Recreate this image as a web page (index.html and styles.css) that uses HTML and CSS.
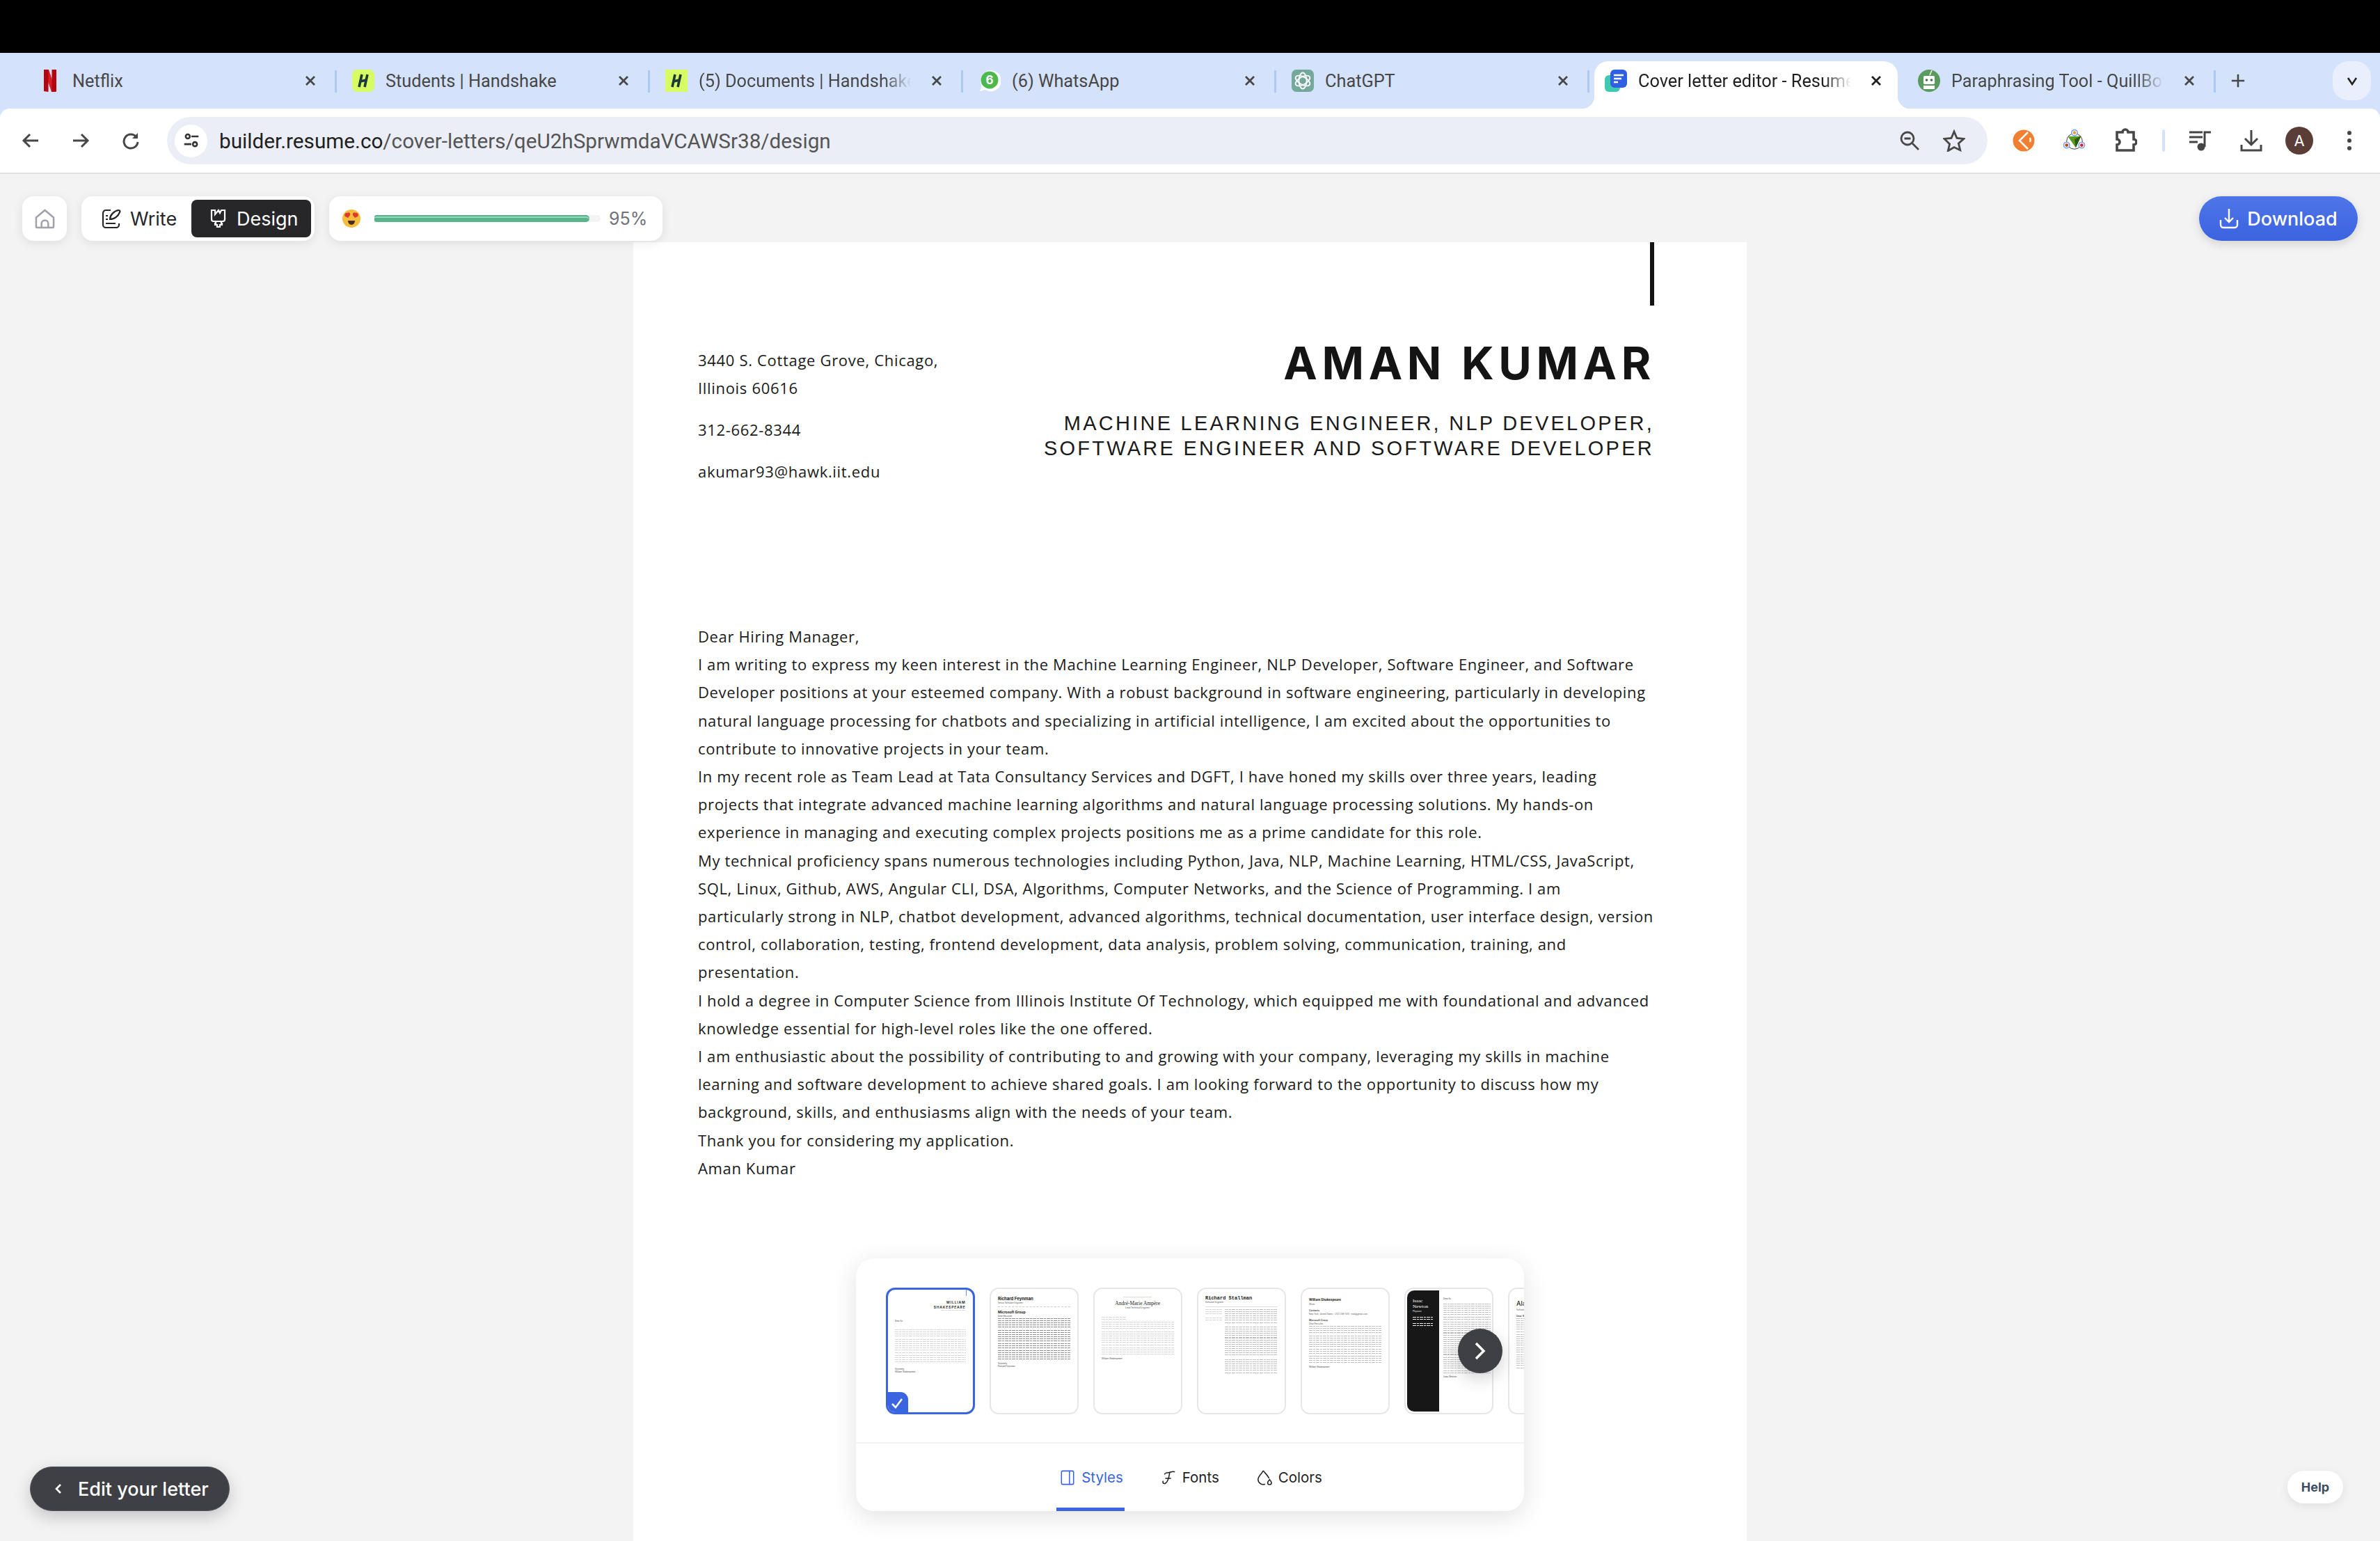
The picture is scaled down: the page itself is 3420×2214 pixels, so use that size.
FILE: index.html
```html
<!DOCTYPE html>
<html lang="en">
<head>
  <meta charset="UTF-8">
  <meta name="viewport" content="width=device-width, initial-scale=1.0">
  <title>Cover letter editor - Resume.co</title>
  <link rel="stylesheet" href="styles.css">
</head>
<body>
  <div class="top-black"></div>

  <!-- browser tabs -->
  <div class="tabstrip">
    <div class="tab sep">
      <svg class="fav" viewBox="0 0 32 32"><path d="M7 0h7l11 32h-7z" fill="#d81f26"/><path d="M7 0h6.500v32L7 31z" fill="#b1060f"/><path d="M18.500 0H25v31l-6.500 1z" fill="#b1060f"/></svg>
      <span class="tab-title">Netflix</span>
      <svg class="tab-x" viewBox="0 0 18 18"><path d="M3 3l12 12M15 3L3 15"/></svg>
    </div>
    <div class="tab sep">
      <svg class="fav" viewBox="0 0 32 32"><rect width="32" height="32" rx="8" fill="#d7fb63"/><path d="M14 7l-4 18M22 7l-4 18M12 17l8-2" stroke="#1c3a3a" stroke-width="3.600" fill="none"/></svg>
      <span class="tab-title">Students | Handshake</span>
      <svg class="tab-x" viewBox="0 0 18 18"><path d="M3 3l12 12M15 3L3 15"/></svg>
    </div>
    <div class="tab sep">
      <svg class="fav" viewBox="0 0 32 32"><rect width="32" height="32" fill="#d7fb63"/><path d="M14 7l-4 18M22 7l-4 18M12 17l8-2" stroke="#1c3a3a" stroke-width="3.600" fill="none"/></svg>
      <span class="tab-title fade">(5) Documents | Handshake</span>
      <svg class="tab-x" viewBox="0 0 18 18"><path d="M3 3l12 12M15 3L3 15"/></svg>
    </div>
    <div class="tab sep">
      <svg class="fav" viewBox="0 0 32 32"><path d="M2 31l2.500-8A15 15 0 1 1 10 29z" fill="#fff"/><circle cx="16" cy="15" r="12.500" fill="#4cb94f"/><text x="16" y="21" class="fav-num">6</text></svg>
      <span class="tab-title">(6) WhatsApp</span>
      <svg class="tab-x" viewBox="0 0 18 18"><path d="M3 3l12 12M15 3L3 15"/></svg>
    </div>
    <div class="tab sep">
      <svg class="fav" viewBox="0 0 32 32"><rect width="32" height="32" rx="7" fill="#74a89a"/><g fill="none" stroke="#fff" stroke-width="1.800"><ellipse cx="16" cy="16" rx="5.500" ry="11.500"/><ellipse cx="16" cy="16" rx="5.500" ry="11.500" transform="rotate(60 16 16)"/><ellipse cx="16" cy="16" rx="5.500" ry="11.500" transform="rotate(120 16 16)"/></g></svg>
      <span class="tab-title">ChatGPT</span>
      <svg class="tab-x" viewBox="0 0 18 18"><path d="M3 3l12 12M15 3L3 15"/></svg>
    </div>
    <div class="tab active">
      <svg class="fav" viewBox="0 0 32 32"><rect x="0" y="8" width="22" height="24" rx="6" fill="#3fc9b0"/><rect x="8" y="0" width="24" height="26" rx="6" fill="#2f5fe3"/><path d="M13 8h14M13 13h11M13 18h6" stroke="#fff" stroke-width="2.600"/></svg>
      <span class="tab-title fade">Cover letter editor - Resume.co</span>
      <svg class="tab-x" viewBox="0 0 18 18"><path d="M3 3l12 12M15 3L3 15"/></svg>
    </div>
    <div class="tab sep no-line-left">
      <svg class="fav" viewBox="0 0 32 32"><circle cx="16" cy="16" r="16" fill="#5b9a5d"/><path d="M17 8l3-7" stroke="#fff" stroke-width="1.500"/><rect x="8" y="9" width="16" height="12" rx="2" fill="#fff"/><circle cx="12.500" cy="15" r="1.800" fill="#3c6e3e"/><circle cx="19.500" cy="15" r="1.800" fill="#3c6e3e"/><rect x="8" y="23" width="16" height="5" fill="#fff"/></svg>
      <span class="tab-title fade">Paraphrasing Tool - QuillBot AI</span>
      <svg class="tab-x" viewBox="0 0 18 18"><path d="M3 3l12 12M15 3L3 15"/></svg>
    </div>
    <svg class="tab-plus" viewBox="0 0 24 24"><path d="M12 2v20M2 12h20"/></svg>
    <div class="tab-menu"><svg viewBox="0 0 18 18"><path d="M3 5l6 9 6-9"/></svg></div>
  </div>

  <!-- url bar -->
  <div class="toolbar">
    <button class="tb-btn"><svg viewBox="0 0 26 26"><path d="M24 13H4M12 4l-9 9 9 9"/></svg></button>
    <button class="tb-btn"><svg viewBox="0 0 26 26"><path d="M2 13h20M14 4l9 9-9 9"/></svg></button>
    <button class="tb-btn"><svg viewBox="0 0 26 26"><path d="M21 8a10 10 0 1 0 2 7"/><path d="M23 2v8h-8" class="solid"/></svg></button>
    <div class="address">
      <span class="site-info"><svg viewBox="0 0 28 28"><circle cx="8" cy="7" r="3.500"/><path d="M14 7h12M2 20h12"/><circle cx="20" cy="20" r="3.500"/></svg></span>
      <span class="url"><b>builder.resume.co</b>/cover-letters/qeU2hSprwmdaVCAWSr38/design</span>
      <svg class="addr-icon zoom-ic" viewBox="0 0 30 30"><circle cx="12" cy="12" r="9"/><path d="M7.500 12h9M19 19l9 9"/></svg>
      <svg class="addr-icon star-ic" viewBox="0 0 32 32"><path d="M16 3l4 9.500 10 .9-7.600 6.500 2.300 9.800L16 25.500l-8.700 5.200 2.300-9.800L2 13.400l10-.9z"/></svg>
    </div>
    <div class="ext-row">
      <button class="tb-btn"><svg viewBox="0 0 32 32" class="flat"><circle cx="16" cy="16" r="15.500" fill="#f07f32"/><path d="M22 4L10 16l12 12" fill="none" stroke="#fff" stroke-width="2.500"/><path d="M25 12c1 2 1 4 0 6" fill="none" stroke="#fff" stroke-width="2.500"/></svg></button>
      <button class="tb-btn"><svg viewBox="0 0 34 34" class="flat"><circle cx="17" cy="18" r="12" fill="none" stroke="#333" stroke-width="1"/><circle cx="17" cy="5" r="4.500" fill="#fff" stroke="#6c98f0" stroke-width="1.500"/><circle cx="17" cy="5" r="2.500" fill="#e8a33c"/><circle cx="5" cy="24" r="4.500" fill="#fff" stroke="#6c98f0" stroke-width="1.500"/><circle cx="5" cy="24" r="2.500" fill="#b3471f"/><circle cx="28" cy="24" r="4.500" fill="#fff" stroke="#6c98f0" stroke-width="1.500"/><circle cx="28" cy="24" r="2.500" fill="#d8232a"/><path d="M7 11l20-1-8 18z" fill="#5b9a1c"/><path d="M17 15l10-5-8 18z" fill="#2d5a12"/></svg></button>
      <button class="tb-btn"><svg class="puzzle" viewBox="0 0 32 36"><path d="M4 6h8a4 4 0 0 1 8 0h8v10a4 4 0 0 1 0 8v8H4v-8a4 4 0 0 0 0-8z"/></svg></button>
      <span class="tb-sep"></span>
      <button class="tb-btn"><svg viewBox="0 0 32 30" class="flat"><path d="M0 3h19M0 10h19M0 17h12" stroke="#444" stroke-width="3"/><path d="M22 24V3h9" fill="none" stroke="#444" stroke-width="3"/><circle cx="17" cy="24" r="5.500" fill="#444"/></svg></button>
      <button class="tb-btn"><svg viewBox="0 0 32 32"><path d="M16 1v20M7 13l9 9 9-9M2 22v8h28v-8"/></svg></button>
      <span class="avatar">A</span>
      <button class="tb-btn"><svg viewBox="0 0 8 32" class="flat"><circle cx="4" cy="5" r="3" fill="#444"/><circle cx="4" cy="16" r="3" fill="#444"/><circle cx="4" cy="27" r="3" fill="#444"/></svg></button>
    </div>
  </div>

  <div class="workspace">
    <div class="appbar">
      <div class="appbar-left">
        <button class="home-btn"><svg viewBox="0 0 30 30"><path d="M2 13L15 2l13 11v13a2 2 0 0 1-2 2H4a2 2 0 0 1-2-2z"/><path d="M10 28v-6a5 5 0 0 1 10 0v6"/></svg></button>
        <div class="mode-switch">
          <button class="mode-btn">
            <svg viewBox="0 0 28 28"><path d="M13 2H6a4 4 0 0 0-4 4v17a4 4 0 0 0 4 4h15a4 4 0 0 0 4-4v-2"/><path d="M6 10h3M6 15h3M6 21h14"/><path d="M12 15c0-6 6-12 12-13 2 0 3 1 2 3-2 5-7 10-14 10z"/></svg>
            Write
          </button>
          <button class="mode-btn on">
            <svg viewBox="0 0 24 28"><path d="M2 2h5v6l5-6 2 4 2-4h5v13a3 3 0 0 1-3 3H5a3 3 0 0 1-3-3z"/><path d="M8 18v3H7v2h3v3h4v-3h3v-2h-1v-3"/></svg>
            Design
          </button>
        </div>
        <div class="score">
          <svg class="score-emoji" viewBox="0 0 26 26"><circle cx="13" cy="13" r="13" fill="#f3bd3e"/><path d="M7 5c2-2 5 0 4 3l-3 4-4-2C2 8 4 4 7 5zM19 5c-2-2-5 0-4 3l3 4 4-2c2-2 0-6-3-5z" fill="#e0392f"/><path d="M8 16h10c0 3-2 6-5 6s-5-3-5-6z" fill="#4a2c1a"/></svg>
          <div class="score-track"><div class="score-fill"></div></div>
          <span class="score-num">95%</span>
        </div>
      </div>
      <button class="download-btn">
        <svg viewBox="0 0 28 30"><path d="M14 1v19M8 14l6 6 6-6M2 17v7a4 4 0 0 0 4 4h16a4 4 0 0 0 4-4v-7"/></svg>
        Download
      </button>
    </div>

    <div class="paper">
      <div class="paper-mark"></div>
      <div class="letter-head">
        <div class="contact">
          <p>3440 S. Cottage Grove, Chicago,<br>Illinois 60616</p>
          <p>312-662-8344</p>
          <p>akumar93@hawk.iit.edu</p>
        </div>
        <div class="who">
          <h1>AMAN KUMAR</h1>
          <h2>MACHINE LEARNING ENGINEER, NLP DEVELOPER,<br>SOFTWARE ENGINEER AND SOFTWARE DEVELOPER</h2>
        </div>
      </div>

      <div class="letter-body">
        <p>Dear Hiring Manager,</p>
        <p>I am writing to express my keen interest in the Machine Learning Engineer, NLP Developer, Software Engineer, and Software<br>Developer positions at your esteemed company. With a robust background in software engineering, particularly in developing<br>natural language processing for chatbots and specializing in artificial intelligence, I am excited about the opportunities to<br>contribute to innovative projects in your team.</p>
        <p>In my recent role as Team Lead at Tata Consultancy Services and DGFT, I have honed my skills over three years, leading<br>projects that integrate advanced machine learning algorithms and natural language processing solutions. My hands-on<br>experience in managing and executing complex projects positions me as a prime candidate for this role.</p>
        <p>My technical proficiency spans numerous technologies including Python, Java, NLP, Machine Learning, HTML/CSS, JavaScript,<br>SQL, Linux, Github, AWS, Angular CLI, DSA, Algorithms, Computer Networks, and the Science of Programming. I am<br>particularly strong in NLP, chatbot development, advanced algorithms, technical documentation, user interface design, version<br>control, collaboration, testing, frontend development, data analysis, problem solving, communication, training, and<br>presentation.</p>
        <p>I hold a degree in Computer Science from Illinois Institute Of Technology, which equipped me with foundational and advanced<br>knowledge essential for high-level roles like the one offered.</p>
        <p>I am enthusiastic about the possibility of contributing to and growing with your company, leveraging my skills in machine<br>learning and software development to achieve shared goals. I am looking forward to the opportunity to discuss how my<br>background, skills, and enthusiasms align with the needs of your team.</p>
        <p>Thank you for considering my application.</p>
        <p>Aman Kumar</p>
      </div>

      <!-- template picker -->
      <div class="picker">
        <div class="thumbs">
          <div class="thumb selected t1">
            <div class="t1-mark"></div>
            <div class="t1-name">WILLIAM<br>SHAKESPEARE</div>
            <div class="lines light n1 short right"></div>
            <div class="mini-label t1-dear">Dear Sir</div>
            <div class="lines light n4"></div>
            <div class="lines light n7"></div>
            <div class="lines light n4"></div>
            <div class="mini-label t1-sign">Sincerely,</div>
            <div class="mini-label">William Shakespeare</div>
            <span class="badge"><svg viewBox="0 0 20 20"><path d="M3 11l5 5 9-12"/></svg></span>
          </div>
          <div class="thumb t2">
            <div class="mini-name">Richard Feynman</div>
            <div class="mini-sub dash">Senior Software Engineer</div>
            <div class="mini-head">Microsoft Group</div>
            <div class="mini-label">Dear Recruiter</div>
            <div class="lines dark n5"></div>
            <div class="lines dark n9"></div>
            <div class="lines dark n5"></div>
            <div class="mini-label">Sincerely,</div>
            <div class="mini-label">Richard Feynman</div>
          </div>
          <div class="thumb t3">
            <div class="mini-dots"></div>
            <div class="mini-name serif">André-Marie Ampère</div>
            <div class="mini-sub center">Lead Technical Engineer</div>
            <div class="lines light n2 short"></div>
            <div class="lines light n4"></div>
            <div class="lines light n7"></div>
            <div class="lines light n4"></div>
            <div class="mini-label">William Shakespeare</div>
          </div>
          <div class="thumb t4">
            <div class="mini-name mono">Richard Stallman</div>
            <div class="mini-sub rule">Software Engineer</div>
            <div class="t4-cols">
              <div class="t4-side"><div class="lines light n3"></div><div class="lines light n2"></div></div>
              <div class="t4-main"><div class="lines mid n7"></div><div class="lines mid n14"></div><div class="lines mid n7"></div></div>
            </div>
          </div>
          <div class="thumb t5">
            <div class="mini-name small">William Shakespeare</div>
            <div class="mini-sub">Writer</div>
            <div class="mini-head small">Contacts</div>
            <div class="mini-sub">New York, United States · (212) 256-1414 · mail@gmail.com</div>
            <div class="mini-head small">Microsoft Group</div>
            <div class="mini-sub">Dear Recruiter</div>
            <div class="lines mid n4"></div>
            <div class="lines mid n9"></div>
            <div class="lines mid n4"></div>
            <div class="mini-label">William Shakespeare</div>
          </div>
          <div class="thumb t6">
            <div class="t6-side">
              <div class="t6-name">Isaac<br>Newton</div>
              <div class="t6-sub">Physicist</div>
              <div class="lines white n2"></div>
              <div class="lines white n2"></div>
            </div>
            <div class="t6-main">
              <div class="mini-label">Dear Sir</div>
              <div class="lines mid n8"></div>
              <div class="lines mid n16"></div>
              <div class="lines mid n8"></div>
              <div class="mini-label">Isaac Newton</div>
            </div>
          </div>
          <div class="thumb t7">
            <div class="mini-name big">Alan</div>
            <div class="mini-sub">Software Engineer</div>
            <div class="mini-head small">Dear Recruiter</div>
            <div class="lines mid n7"></div>
            <div class="lines mid n9"></div>
            <div class="lines mid n7"></div>
          </div>
        </div>
        <button class="next-btn"><svg viewBox="0 0 18 26"><path d="M3 2l11 11L3 24"/></svg></button>
        <div class="picker-tabs">
          <button class="p-tab on"><svg viewBox="0 0 22 24"><rect x="1.500" y="1.500" width="19" height="21" rx="2"/><path d="M14 2v20"/></svg>Styles</button>
          <button class="p-tab"><svg viewBox="0 0 24 24"><path d="M22 3c-3-2-6 1-10 1-3 0-6 1-6 3M14 4c-1 6-2 15-7 17-3 1-5-2-3-4M7 13h9"/></svg>Fonts</button>
          <button class="p-tab"><svg viewBox="0 0 24 24"><path d="M10 1c-1 4-8 8-8 14a8 8 0 0 0 11 7M10 1c2 3 7 7 9 12"/><path d="M20 15c-1 2-3 3-3 5a3 3 0 0 0 6 0c0-2-2-3-3-5z"/></svg>Colors</button>
        </div>
      </div>
    </div>

    <button class="edit-btn"><svg viewBox="0 0 12 16"><path d="M9 2L3 8l6 6"/></svg>Edit your letter</button>
    <button class="help-btn">Help</button>
  </div>
</body>
</html>
```

FILE: styles.css
```css
* {
  box-sizing: border-box;
}
html, body {
  height: 100%;
  overflow: hidden;
}
body {
  margin: 0;
  display: flex;
  flex-direction: column;
  background: #d5e2fb;
  font-family: Inter, "Liberation Sans", sans-serif;
  color: #27272a;
}
button {
  font: inherit;
  border: 0;
  background: none;
  padding: 0;
}
svg {
  display: block;
}
.top-black {
  height: 76px;
  background: #000;
  flex: none;
}

/* tabs */
.tabstrip {
  height: 80px;
  flex: none;
  display: flex;
  padding-left: 33px;
  position: relative;
}
.tab {
  width: 450px;
  height: 80px;
  padding: 24px 28px 24px 23px;
  display: flex;
  align-items: flex-start;
  gap: 16px;
  position: relative;
  flex: none;
}
.tab.sep::after {
  content: "";
  position: absolute;
  right: -1px;
  top: 25px;
  width: 3px;
  height: 32px;
  background: #adc8f5;
}
.fav {
  width: 32px;
  height: 32px;
  flex: none;
  position: relative;
  z-index: 1;
}
.fav-num {
  font: bold 17px Inter, sans-serif;
  fill: #fff;
  text-anchor: middle;
}
.tab-title {
  width: 306px;
  flex: none;
  font-family: Roboto, Inter, sans-serif;
  font-size: 25.300px;
  line-height: 33px;
  color: #474747;
  white-space: nowrap;
  overflow: hidden;
  position: relative;
  z-index: 1;
}
.tab-title.fade {
  -webkit-mask-image: linear-gradient(to right, #000 87%, transparent 100%);
  mask-image: linear-gradient(to right, #000 87%, transparent 100%);
}
.tab-x {
  width: 18px;
  height: 18px;
  flex: none;
  margin: 7px 0 0 11px;
  position: relative;
  z-index: 1;
  stroke: #474747;
  stroke-width: 2.800;
  fill: none;
}
.tab.active .tab-title {
  color: #1f1f1f;
}
.tab.active .tab-x {
  stroke: #1f1f1f;
}
.tab.active::before {
  content: "";
  position: absolute;
  left: 8px;
  right: 6px;
  top: 12px;
  bottom: 0;
  background: #fff;
  border-radius: 20px 20px 0 0;
}
.tab.active::after {
  content: "";
  position: absolute;
  left: -10px;
  right: -12px;
  bottom: 0;
  height: 18px;
  background:
    radial-gradient(circle at 0 0, transparent 18px, #fff 18.500px) left bottom / 18px 18px no-repeat,
    radial-gradient(circle at 100% 0, transparent 18px, #fff 18.500px) right bottom / 18px 18px no-repeat;
}
.tab-plus {
  width: 22px;
  height: 22px;
  margin: 29px 0 0 22px;
  stroke: #474747;
  stroke-width: 2.800;
  fill: none;
  flex: none;
}
.tab-menu {
  position: absolute;
  right: 13px;
  top: 12px;
  width: 55px;
  height: 56px;
  border-radius: 22px;
  background: #e9effd;
  display: flex;
  align-items: center;
  justify-content: center;
}
.tab-menu svg {
  width: 18px;
  height: 18px;
  stroke: #222;
  stroke-width: 2.600;
  fill: none;
}

/* url bar */
.toolbar {
  height: 94px;
  flex: none;
  background: #fff;
  border-bottom: 2px solid #e0e0e0;
  border-radius: 14px 14px 0 0;
  padding: 12px 22px 12px 22px;
  display: flex;
  align-items: center;
  gap: 28px;
}
.tb-btn {
  width: 44px;
  height: 44px;
  flex: none;
  display: flex;
  align-items: center;
  justify-content: center;
}
.tb-btn svg {
  width: 26px;
  height: 26px;
  stroke: #474747;
  stroke-width: 3;
  fill: none;
}
.tb-btn svg.flat {
  stroke: none;
}
.ext-row .tb-btn svg {
  width: 32px;
  height: 32px;
}
.ext-row .tb-btn svg.puzzle {
  width: 34px;
  height: 36px;
  stroke-width: 3.600;
}
.ext-row .tb-btn:last-child svg {
  width: 10px;
}
.tb-btn svg .solid {
  fill: #474747;
  stroke: none;
}
.address {
  flex: 1;
  height: 68px;
  margin-left: 2px;
  border-radius: 34px;
  background: #ebeef6;
  display: flex;
  align-items: center;
  padding: 0 32px 0 11px;
}
.site-info {
  width: 47px;
  height: 47px;
  border-radius: 50%;
  background: #fff;
  display: flex;
  align-items: center;
  justify-content: center;
  flex: none;
}
.site-info svg {
  width: 24px;
  height: 24px;
  stroke: #333;
  stroke-width: 3;
  fill: none;
}
.url {
  flex: 1;
  margin-left: 17px;
  font-family: Roboto, Inter, sans-serif;
  font-size: 29.700px;
  color: #555;
  white-space: nowrap;
}
.url b {
  font-weight: 400;
  color: #1f1f1f;
}
.addr-icon {
  flex: none;
  stroke: #474747;
  stroke-width: 2.800;
  fill: none;
}
.zoom-ic {
  width: 30px;
  height: 30px;
}
.star-ic {
  width: 32px;
  height: 32px;
  margin-left: 33px;
}
.ext-row {
  display: flex;
  align-items: center;
  gap: 29px;
  margin-left: 2px;
}
.tb-sep {
  width: 4px;
  height: 32px;
  margin-left: 2px;
  border-radius: 2px;
  background: #d3e3fd;
  flex: none;
}
.avatar {
  width: 40px;
  height: 40px;
  border-radius: 50%;
  background: #5a3d36;
  color: #fff;
  font-size: 22px;
  display: flex;
  align-items: center;
  justify-content: center;
  flex: none;
  margin: 0 1px 0 -2px;
}

/* app area */
.workspace {
  flex: 1;
  min-height: 0;
  background: #f3f3f3;
  position: relative;
  padding-top: 32px;
  display: flex;
  flex-direction: column;
}
.appbar {
  height: 64px;
  flex: none;
  padding: 0 32px;
  display: flex;
  justify-content: space-between;
  position: relative;
  z-index: 2;
}
.appbar-left {
  display: flex;
  gap: 21px;
}
.home-btn,
.mode-switch,
.score {
  background: #fff;
  border-radius: 16px;
  box-shadow: 0 3px 14px rgba(0, 0, 0, 0.09);
}
.home-btn {
  width: 64px;
  display: flex;
  align-items: center;
  justify-content: center;
}
.home-btn svg {
  width: 29px;
  height: 29px;
  stroke: #a1a1aa;
  stroke-width: 2.600;
  fill: none;
}
.mode-switch {
  width: 335px;
  padding: 5px;
  display: flex;
  justify-content: space-between;
}
.mode-btn {
  flex: none;
  display: flex;
  align-items: center;
  gap: 13px;
  font-size: 27px;
  color: #27272a;
  padding: 0 0 0 24px;
  border-radius: 8px;
}
.mode-btn svg {
  width: 28px;
  height: 28px;
  stroke: currentColor;
  stroke-width: 2.200;
  fill: none;
}
.mode-btn.on {
  width: 172px;
  padding: 0 0 0 27px;
  background: #27272a;
  color: #fff;
  gap: 14px;
}
.mode-btn.on svg {
  width: 24px;
}
.score {
  width: 479px;
  display: flex;
  align-items: center;
  padding: 0 25px 0 19px;
}
.score-emoji {
  width: 26px;
  height: 26px;
  flex: none;
}
.score-track {
  width: 325px;
  height: 10px;
  margin-left: 20px;
  background: #f4f4f5;
  border-radius: 5px;
  flex: none;
}
.score-fill {
  width: 95%;
  height: 10px;
  border-radius: 3px 5px 5px 3px;
  background: #56b58a;
  border-top: 2px solid #54b388;
  box-shadow: inset 0 2px 0 #9bd6bb;
}
.score-num {
  margin-left: 12px;
  font-size: 25px;
  color: #71717a;
}
.download-btn {
  width: 228px;
  border-radius: 32px;
  background: linear-gradient(#4f75e8, #3b63e0);
  color: #fff;
  font-size: 27px;
  font-weight: 500;
  display: flex;
  align-items: center;
  justify-content: center;
  gap: 12px;
  box-shadow: 0 4px 14px rgba(0, 0, 0, 0.14);
}
.download-btn svg {
  width: 28px;
  height: 30px;
  stroke: #fff;
  stroke-width: 2.400;
  fill: none;
}

/* the letter */
.paper {
  flex: 1;
  width: 1600px;
  margin: 2px 0 0 910px;
  background: #fff;
  position: relative;
  padding: 0 131px 0 93px;
  color: #1a1a1a;
  font-family: "Open Sans", sans-serif;
}
.paper-mark {
  width: 6px;
  height: 91px;
  margin-left: auto;
  margin-right: 2px;
  background: #141414;
}
.letter-head {
  margin-top: 57px;
  display: flex;
  justify-content: space-between;
}
.contact {
  font-size: 22px;
  line-height: 40px;
  padding-top: 1px;
  letter-spacing: 0.680px;
}
.contact p {
  margin: 0 0 20px;
}
.who {
  text-align: right;
  margin-top: -10px;
}
.who h1 {
  margin: 0;
  font-family: Inter, "Liberation Sans", sans-serif;
  font-size: 65px;
  font-weight: 700;
  line-height: 72px;
  letter-spacing: 6.600px;
  color: #141414;
}
.who h2 {
  margin: 33px 2px 0 0;
  font-family: "Liberation Sans", sans-serif;
  font-size: 29px;
  font-weight: 400;
  line-height: 35.500px;
  letter-spacing: 3.250px;
}
.letter-body {
  margin-top: 177px;
  font-size: 22px;
  line-height: 40.200px;
  letter-spacing: 0.630px;
  white-space: nowrap;
}
.letter-body p {
  margin: 0;
}

/* template picker */
.picker {
  position: absolute;
  left: 320px;
  bottom: 43px;
  width: 960px;
  height: 363px;
  border-radius: 26px;
  background: #fff;
  box-shadow: 0 8px 36px rgba(0, 0, 0, 0.12);
  overflow: hidden;
  font-family: Inter, sans-serif;
  color: #222;
}
.thumbs {
  height: 266px;
  padding: 42px 0 0 43px;
  display: flex;
  gap: 21.500px;
  border-bottom: 2px solid #f3f3f3;
  overflow: hidden;
}
.thumb {
  width: 127.500px;
  height: 182px;
  flex: none;
  border: 2px solid #e6e6e6;
  border-radius: 13px;
  padding: 10px;
  position: relative;
  overflow: hidden;
  background: #fff;
}
.thumb.selected {
  border: 3px solid #3b65e0;
}
.badge {
  position: absolute;
  left: -3px;
  bottom: -3px;
  width: 32px;
  height: 32px;
  border-radius: 0 11px 0 11px;
  background: #3b65e0;
  display: flex;
  align-items: center;
  justify-content: center;
}
.badge svg {
  width: 20px;
  height: 20px;
  stroke: #fff;
  stroke-width: 2.500;
  fill: none;
}
/* tiny paragraphs in the previews, the mask makes the word gaps */
.lines {
  margin-bottom: 2px;
  background: repeating-linear-gradient(to bottom, #bbb 0 1px, transparent 1px 3.100px);
  -webkit-mask-image: repeating-linear-gradient(to right, #000 0 5px, transparent 5px 6px, #000 6px 9px, transparent 9px 10px);
  mask-image: repeating-linear-gradient(to right, #000 0 5px, transparent 5px 6px, #000 6px 9px, transparent 9px 10px);
}
.lines.light { background: repeating-linear-gradient(to bottom, #d6d6d6 0 1px, transparent 1px 3.100px); }
.lines.mid { background: repeating-linear-gradient(to bottom, #bdbdbd 0 1px, transparent 1px 3.100px); }
.lines.dark { background: repeating-linear-gradient(to bottom, #8c8c8c 0 1px, transparent 1px 3.100px); }
.lines.white { background: repeating-linear-gradient(to bottom, #eee 0 1px, transparent 1px 3.100px); margin-top: 4px; }
.lines.short { width: 35%; }
.lines.right { margin-left: auto; }
.n1 { height: 2px; }
.n2 { height: 5px; }
.n3 { height: 8px; }
.n4 { height: 12px; }
.n5 { height: 15px; }
.n7 { height: 21px; }
.n8 { height: 24px; }
.n9 { height: 27px; }
.n14 { height: 43px; }
.n16 { height: 49px; }
.mini-name {
  font-size: 6px;
  font-weight: 700;
  line-height: 8px;
  white-space: nowrap;
}
.mini-name.serif {
  font-family: "Liberation Serif", serif;
  font-size: 7.500px;
  text-align: center;
  font-weight: 400;
}
.mini-name.mono {
  font-family: "Liberation Mono", monospace;
  font-size: 7px;
  margin-top: -1px;
}
.mini-name.small {
  font-size: 4.500px;
  margin-top: 2px;
}
.mini-name.big {
  font-size: 9px;
  font-weight: 500;
  line-height: 14px;
  margin-top: 4px;
}
.mini-sub {
  font-size: 3px;
  line-height: 5px;
  color: #555;
  white-space: nowrap;
}
.mini-sub.center {
  text-align: center;
  margin-bottom: 10px;
}
.mini-sub.dash {
  border-bottom: 1px dashed #ccc;
  padding-bottom: 2px;
  margin-bottom: 4px;
}
.mini-sub.rule {
  border-bottom: 1px solid #ddd;
  padding-bottom: 3px;
  margin-bottom: 3px;
}
.mini-head {
  font-size: 5px;
  font-weight: 700;
  line-height: 7px;
}
.mini-head.small {
  font-size: 3.500px;
  font-weight: 500;
  line-height: 6px;
  margin-top: 3px;
}
.mini-label {
  font-size: 3px;
  line-height: 4.500px;
  color: #444;
  white-space: nowrap;
}
.mini-dots {
  height: 1px;
  width: 40%;
  margin: 1px auto 5px;
  background: #ddd;
}
.t1-mark {
  position: absolute;
  right: 9px;
  top: 0;
  width: 1px;
  height: 9px;
  background: #6f8fe8;
}
.t1-name {
  margin-top: 5px;
  font-size: 5px;
  font-weight: 700;
  line-height: 7px;
  letter-spacing: 0.800px;
  text-align: right;
  white-space: nowrap;
  color: #333;
}
.t1-dear {
  margin: 12px 0 9px;
}
.t1-sign {
  margin-top: 6px;
}
.t4-cols {
  display: flex;
  gap: 4px;
}
.t4-side {
  width: 24px;
  flex: none;
}
.t4-main {
  flex: 1;
}
.t4 .lines {
  margin-bottom: 4px;
}
.thumb.t6 {
  display: flex;
  padding: 2px;
  gap: 6px;
}
.t6-side {
  width: 46px;
  flex: none;
  background: #171717;
  border-radius: 10px 0 0 10px;
  color: #fff;
  padding: 11px 8px;
}
.t6-name {
  font-family: "Liberation Serif", serif;
  font-size: 7px;
  line-height: 8px;
}
.t6-sub {
  font-size: 3px;
  line-height: 6px;
  margin-bottom: 5px;
}
.t6-main {
  flex: 1;
  padding: 10px 0 0;
  min-width: 0;
}
.t6-main .mini-label {
  margin-bottom: 4px;
}
.next-btn {
  position: absolute;
  left: 865px;
  top: 101px;
  width: 64px;
  height: 64px;
  border-radius: 50%;
  background: #3f4045;
  display: flex;
  align-items: center;
  justify-content: center;
  box-shadow: 0 8px 24px rgba(0, 0, 0, 0.18);
}
.next-btn svg {
  width: 18px;
  height: 26px;
  stroke: #fff;
  stroke-width: 3.500;
  fill: none;
}
.picker-tabs {
  height: 97px;
  display: flex;
  justify-content: center;
  gap: 47px;
}
.p-tab {
  display: flex;
  align-items: center;
  gap: 9px;
  height: 97px;
  padding: 5px 2px 0 5px;
  font-size: 20.500px;
  font-weight: 400;
  color: #222;
  border-bottom: 5px solid transparent;
}
.p-tab svg {
  width: 22px;
  height: 22px;
  stroke: currentColor;
  stroke-width: 1.700;
  fill: none;
}
.p-tab.on {
  color: #3b65e0;
  border-bottom-color: #3b65e0;
}

/* floating buttons */
.edit-btn {
  position: absolute;
  left: 43px;
  bottom: 43px;
  width: 287px;
  height: 64px;
  border-radius: 32px;
  border: 1px solid #55565b;
  background: #3f4045;
  color: #fff;
  font-size: 27px;
  font-weight: 500;
  display: flex;
  align-items: center;
  padding-left: 34px;
  gap: 22px;
  box-shadow: 0 8px 24px rgba(0, 0, 0, 0.2);
}
.edit-btn svg {
  width: 12px;
  height: 16px;
  stroke: #fff;
  stroke-width: 2.600;
  fill: none;
}
.help-btn {
  position: absolute;
  left: 3287px;
  bottom: 54px;
  width: 80px;
  height: 47px;
  border-radius: 24px;
  background: #fff;
  color: #3d4d60;
  font-size: 18px;
  font-weight: 700;
  box-shadow: 0 4px 14px rgba(0, 0, 0, 0.08);
}
```
